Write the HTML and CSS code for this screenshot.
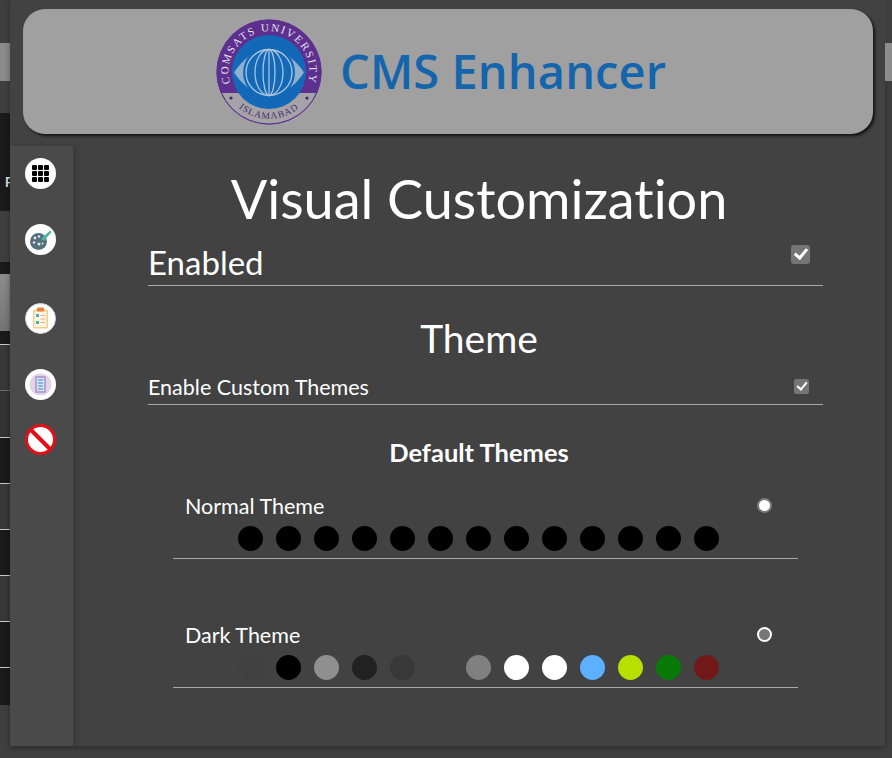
FILE: index.html
```html
<!DOCTYPE html>
<html lang="en">
<head>
    <meta charset="UTF-8">
    <meta name="viewport" content="width=device-width, initial-scale=1.0">
    <title>CMS Enhancer</title>
    <link rel="stylesheet" href="styles.css">
</head>
<body>
    <div class="page-left">
        <div class="strip s-mid h43"></div>
        <div class="strip s-grey h38"></div>
        <div class="strip s-mid h32"></div>
        <div class="strip s-dark h98"><span class="strip-letter">F</span></div>
        <div class="strip s-mid h51"></div>
        <div class="strip s-dark h12"></div>
        <div class="strip s-fade h57"></div>
        <div class="strip s-dark s-line h14"></div>
        <div class="strip s-row s-faint h46"></div>
        <div class="strip s-row s-low h47"></div>
        <div class="strip s-darkrow h46"></div>
        <div class="strip s-row h46"></div>
        <div class="strip s-darkrow h46"></div>
        <div class="strip s-row h46"></div>
        <div class="strip s-darkrow h46"></div>
        <div class="strip s-dark h37"></div>
        <div class="strip s-mid h53"></div>
    </div>

    <div class="popup">
        <div class="brand">
            <svg class="brand-logo" viewBox="0 0 106 106" width="106" height="106">
                <defs>
                    <path id="arc-top" d="M15 66.9 A40.5 40.5 0 1 1 91 66.9"/>
                    <path id="arc-bottom" d="M12.3 76.5 A47 47 0 0 0 93.7 76.5"/>
                </defs>
                <circle cx="53" cy="53" r="52.5" fill="#5d2f8e"/>
                <path d="M5.4 74 A52 52 0 0 0 100.6 74 Z" fill="#a5a3a8"/>
                <circle cx="53" cy="53" r="52" fill="none" stroke="#5d2f8e" stroke-width="1"/>
                <circle cx="53" cy="53" r="37" fill="#1369b8"/>
                <path d="M18 53.5 C30 36 42 31 53 31 C64 31 76 36 88 53.5 C76 71 64 76 53 76 C42 76 30 71 18 53.5 Z" fill="#8fb0cf"/>
                <ellipse cx="53" cy="53.5" rx="26" ry="26" fill="#1369b8"/>
                <g fill="none" stroke="#a9c4dc" stroke-width="1.3">
                    <ellipse cx="53" cy="53.5" rx="23" ry="23"/>
                    <ellipse cx="53" cy="53.5" rx="14" ry="23"/>
                    <ellipse cx="53" cy="53.5" rx="6" ry="23"/>
                    <path d="M53 30.5 V76.5"/>
                </g>
                <text class="logo-top"><textPath href="#arc-top" startOffset="50%" text-anchor="middle">COMSATS UNIVERSITY</textPath></text>
                <text class="logo-bottom"><textPath href="#arc-bottom" startOffset="50%" text-anchor="middle">ISLAMABAD</textPath></text>
                <circle cx="15" cy="79" r="1.6" fill="#3a2a6b"/>
                <circle cx="91" cy="79" r="1.6" fill="#3a2a6b"/>
            </svg>
            <span class="brand-name">CMS Enhancer</span>
        </div>

        <div class="body-wrap">
            <div class="sidebar">
                <button class="side-btn">
                    <svg viewBox="0 0 31 31" width="31" height="31">
                        <circle cx="15.5" cy="15.5" r="15.5" fill="#fff"/>
                        <g fill="#000">
                            <rect x="7" y="7" width="5" height="5" rx="1"/><rect x="13" y="7" width="5" height="5" rx="1"/><rect x="19" y="7" width="5" height="5" rx="1"/>
                            <rect x="7" y="13" width="5" height="5" rx="1"/><rect x="13" y="13" width="5" height="5" rx="1"/><rect x="19" y="13" width="5" height="5" rx="1"/>
                            <rect x="7" y="19" width="5" height="5" rx="1"/><rect x="13" y="19" width="5" height="5" rx="1"/><rect x="19" y="19" width="5" height="5" rx="1"/>
                        </g>
                    </svg>
                </button>
                <button class="side-btn palette">
                    <svg viewBox="0 0 31 31" width="31" height="31">
                        <circle cx="15.5" cy="15.5" r="15.5" fill="#fff"/>
                        <circle cx="13.5" cy="17.5" r="8.5" fill="#54707c"/>
                        <path d="M16 15 L25 6.5 L26.5 8 L19 17 Z" fill="#4eb3a2"/>
                        <g fill="#dfe8ea">
                            <circle cx="10" cy="14" r="1.4"/><circle cx="14" cy="12.5" r="1.2"/><circle cx="9" cy="18.5" r="1.3"/><circle cx="14" cy="20" r="1.5"/><circle cx="17.5" cy="19.5" r="1"/>
                        </g>
                    </svg>
                </button>
                <button class="side-btn clipboard">
                    <svg viewBox="0 0 31 31" width="31" height="31">
                        <circle cx="15.5" cy="15.5" r="15" fill="#fff" stroke="#d5d5e4"/>
                        <rect x="8" y="6.5" width="15" height="19" rx="1.5" fill="#f6cd8b"/>
                        <rect x="9.5" y="8.5" width="12" height="15.5" fill="#fdf6e6"/>
                        <rect x="12" y="4.5" width="7" height="4" rx="1" fill="#e9803d"/>
                        <rect x="11" y="11" width="3" height="3" fill="#41a9d8"/>
                        <rect x="11" y="18" width="3" height="3" fill="#38b79f"/>
                        <path d="M15.5 12.5H20M15.5 16H20M15.5 19.5H20" stroke="#e8b06a"/>
                    </svg>
                </button>
                <button class="side-btn list">
                    <svg viewBox="0 0 31 31" width="31" height="31">
                        <circle cx="15.5" cy="15.5" r="15.5" fill="#fff"/>
                        <circle cx="15.5" cy="15.5" r="11" fill="#e4d3e8"/>
                        <rect x="10" y="7" width="11" height="17" rx="1" fill="#b3a3cf"/>
                        <rect x="12" y="9" width="7" height="13" fill="#dbe6f3"/>
                        <path d="M13 11H18M13 14H18M13 17H18M13 20H18" stroke="#6ca7d8" stroke-width="1.4"/>
                    </svg>
                </button>
                <button class="side-btn block">
                    <svg viewBox="0 0 31 31" width="31" height="31">
                        <circle cx="15.5" cy="15.5" r="14" fill="#fff" stroke="#e20f17" stroke-width="3"/>
                        <path d="M6 6 L25 25" stroke="#e20f17" stroke-width="4"/>
                    </svg>
                </button>
            </div>

            <div class="content">
                <h1 class="title">Visual Customization</h1>
                <div class="setting-row big-row">
                    <span class="big-label">Enabled</span>
                    <input class="check big-check" type="checkbox" checked>
                </div>

                <h2 class="section-title">Theme</h2>
                <div class="setting-row small-row">
                    <span class="small-label">Enable Custom Themes</span>
                    <input class="check" type="checkbox" checked>
                </div>

                <h3 class="sub-title">Default Themes</h3>

                <div class="theme-box">
                    <div class="theme-head">
                        <span class="small-label">Normal Theme</span>
                        <span class="radio selected"></span>
                    </div>
                    <div class="swatches">
                        <i style="background:#000"></i><i style="background:#000"></i><i style="background:#000"></i><i style="background:#000"></i><i style="background:#000"></i><i style="background:#000"></i><i style="background:#000"></i><i style="background:#000"></i><i style="background:#000"></i><i style="background:#000"></i><i style="background:#000"></i><i style="background:#000"></i><i style="background:#000"></i>
                    </div>
                </div>

                <div class="theme-box dark-box">
                    <div class="theme-head">
                        <span class="small-label">Dark Theme</span>
                        <span class="radio"></span>
                    </div>
                    <div class="swatches">
                        <i style="background:#404040"></i><i style="background:#000"></i><i style="background:#8f8f8f"></i><i style="background:#212121"></i><i style="background:#383838"></i><i style="background:#424242"></i><i style="background:#808080"></i><i style="background:#fff"></i><i style="background:#fff"></i><i style="background:#5cb0ff"></i><i style="background:#b7e000"></i><i style="background:#087a08"></i><i style="background:#731818"></i>
                    </div>
                </div>
            </div>
        </div>
    </div>

    <div class="page-right">
        <div class="strip s-mid h43"></div>
        <div class="strip s-grey h38"></div>
    </div>
</body>
</html>
```

FILE: styles.css
```css
html, body {
    height: 100%;
}
body {
    margin: 0;
    height: 758px;
    overflow: hidden;
    display: flex;
    background-color: #3f3f3f;
    font-family: "Lato", sans-serif;
    font-variant-ligatures: none;
    color: #fff;
}

/* page peeking out behind the popup */
.page-left {
    width: 10px;
    flex: none;
    overflow: hidden;
}
.page-right {
    width: 7px;
    flex: none;
}
.strip {
    box-sizing: border-box;
    overflow: hidden;
}
.s-mid { background-color: #3f3f3f; }
.s-grey { background-color: #8c8c8c; }
.s-dark { background-color: #1a1a1a; }
.s-fade { background: linear-gradient(#8c8c8c, #747474); }
.s-line { border-bottom: 1px solid #c8c8c8; }
.s-row { background-color: #383838; border-bottom: 1px solid #c8c8c8; }
.s-darkrow { background-color: #1a1a1a; border-bottom: 1px solid #c8c8c8; }
.s-faint { border-bottom-color: #6a6a6a; }
.s-low { background-color: #333; }
.h12 { height: 12px; }
.h14 { height: 14px; }
.h32 { height: 32px; }
.h37 { height: 37px; }
.h38 { height: 38px; }
.h43 { height: 43px; }
.h46 { height: 46px; }
.h47 { height: 47px; }
.h51 { height: 51px; }
.h53 { height: 53px; }
.h57 { height: 57px; }
.h98 { height: 98px; }
.strip-letter {
    display: block;
    margin: 62px 0 0 5px;
    font-size: 13px;
    line-height: 15px;
    font-weight: bold;
    color: #dfe6ee;
}

.popup {
    width: 875px;
    height: 746px;
    flex: none;
    background-color: #424242;
    box-shadow: 0 1px 6px rgba(0, 0, 0, 0.35);
    display: flex;
    flex-direction: column;
}

.brand {
    margin: 9px 12px 0 13px;
    height: 125px;
    flex: none;
    border-radius: 22px;
    background-color: #a0a0a0;
    box-shadow: 2px 2px 3px rgba(0, 0, 0, 0.7);
    display: flex;
    align-items: center;
    padding-left: 193px;
    gap: 18px;
}
.brand-logo {
    flex: none;
}
.logo-top {
    font-family: "Liberation Serif", serif;
    font-size: 11px;
    letter-spacing: 1.7px;
    fill: #e6e2ee;
}
.logo-bottom {
    font-family: "Liberation Serif", serif;
    font-size: 9.5px;
    letter-spacing: 1px;
    fill: #3f2f6e;
}
.brand-name {
    font-family: "Open Sans", sans-serif;
    font-size: 47px;
    font-weight: 600;
    letter-spacing: 0.1px;
    color: #1565ad;
    margin-top: -2px;
}

.body-wrap {
    flex: 1;
    display: flex;
    margin-top: 12px;
    min-height: 0;
}

.sidebar {
    width: 63px;
    flex: none;
    background-color: #4a4a4a;
    box-shadow: 3px 0 5px rgba(0, 0, 0, 0.15);
    display: flex;
    flex-direction: column;
    align-items: center;
    padding: 12px 2px 0 0;
    box-sizing: border-box;
}
.side-btn {
    width: 31px;
    height: 31px;
    padding: 0;
    border: none;
    background: none;
    flex: none;
}
.side-btn svg {
    display: block;
}
.palette { margin-top: 35px; }
.clipboard { margin-top: 48px; }
.list { margin-top: 35px; }
.block { margin-top: 24px; }

.content {
    flex: 1;
    min-width: 0;
}
.title {
    margin: 23px 0 0;
    font-size: 54px;
    line-height: 60px;
    font-weight: normal;
    text-align: center;
}
.setting-row {
    width: 675px;
    margin-left: 75px;
    display: flex;
    justify-content: space-between;
    border-bottom: 1px solid #a8a8a8;
}
.big-row {
    height: 56px;
    align-items: flex-end;
}
.big-label {
    font-size: 33px;
    line-height: 46px;
}
.section-title {
    margin: 29px 0 0;
    font-size: 39px;
    line-height: 46px;
    font-weight: normal;
    text-align: center;
}
.small-row {
    height: 36px;
    margin-top: 7px;
}
.small-row .small-label {
    line-height: 38px;
}
.small-label {
    font-size: 21.5px;
}
.check {
    appearance: none;
    width: 15px;
    height: 15px;
    border-radius: 2px;
    background-color: #757575;
    position: relative;
    margin: 11px 14px 0 0;
    flex: none;
}
.check::after {
    content: "";
    position: absolute;
    left: 5px;
    top: 1px;
    width: 4px;
    height: 8px;
    border: solid #fff;
    border-width: 0 2.4px 2.4px 0;
    transform: rotate(40deg);
}
.big-check {
    width: 19px;
    height: 19px;
    border-radius: 3px;
    margin: 16px 13px 0 0;
    align-self: flex-start;
}
.big-check::after {
    left: 6px;
    top: 1px;
    width: 5px;
    height: 10px;
    border-width: 0 3px 3px 0;
}
.sub-title {
    margin: 31px 0 0;
    font-size: 25.5px;
    line-height: 32px;
    font-weight: bold;
    text-align: center;
}

.theme-box {
    width: 625px;
    margin: 23px 0 0 100px;
    border-bottom: 1px solid #a8a8a8;
}
.dark-box {
    margin-top: 61px;
}
.theme-head {
    display: flex;
    justify-content: space-between;
    padding: 0 26px 0 12px;
    height: 35px;
    line-height: 30px;
}
.radio {
    width: 11px;
    height: 11px;
    margin-top: 7px;
    border-radius: 50%;
    border: 2px solid #8a8a8a;
    background-color: #fff;
    flex: none;
}
.radio.selected {
    border-color: #7a7a7a;
}
.dark-box .radio {
    background-color: #777;
    border-color: #fff;
}
.swatches {
    display: flex;
    justify-content: center;
    gap: 13px;
    padding-right: 14px;
    height: 32px;
}
.swatches i {
    display: block;
    width: 25px;
    height: 25px;
    border-radius: 50%;
    flex: none;
}
```
